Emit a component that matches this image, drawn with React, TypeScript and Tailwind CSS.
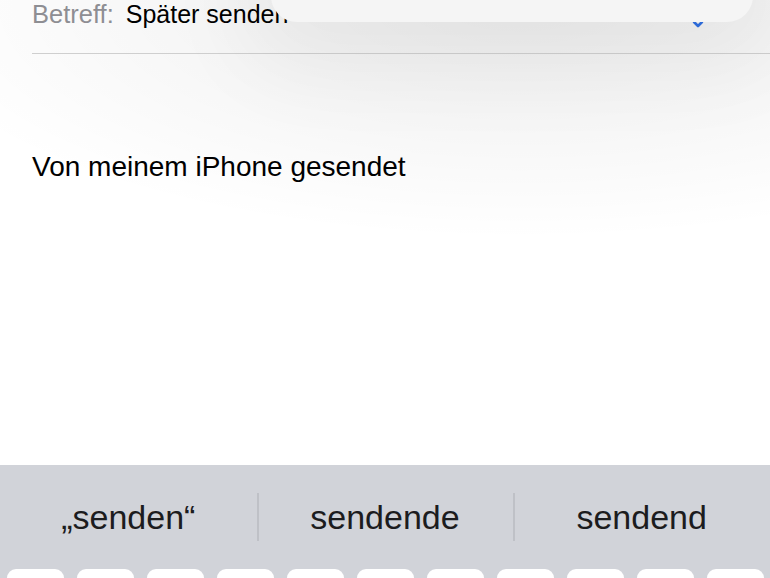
import React from "react";

export default function App() {
  const keys = Array.from({ length: 11 }, (_, i) => i);
  return (
    <div
      className="relative w-[770px] h-[578px] overflow-hidden bg-white flex flex-col"
      style={{ fontFamily: '"Liberation Sans", Arial, sans-serif' }}
    >
      {/* soft shadow backdrop */}
      <div className="absolute inset-0 bg-[radial-gradient(ellipse_640px_240px_at_520px_0px,rgba(0,0,0,0.075),rgba(0,0,0,0.0)_100%)]" />

      {/* subject row */}
      <div className="relative flex items-start ml-[32px] h-[54px] border-b border-[#cfcfcf]">
        <span className="text-[25.5px] leading-[28px] text-[#8e8e93]">Betreff:</span>
        <span className="ml-[12px] text-[25px] leading-[28px] text-black">Später senden</span>
        <svg className="ml-auto mr-[66px] mt-[19px]" width="12" height="10" viewBox="0 0 12 10">
          <path d="M2 3 L6 7 L10 3" fill="none" stroke="#2f6fe0" strokeWidth="2.6" strokeLinecap="round" strokeLinejoin="round" />
        </svg>
      </div>

      {/* popup overlay */}
      <div className="absolute left-[271px] top-[-60px] w-[482px] h-[82px] rounded-[26px] bg-[#f5f5f5] shadow-[0_16px_90px_30px_rgba(0,0,0,0.05)]" />

      {/* body */}
      <div className="relative ml-[32px] mt-[96px] text-[28px] leading-[34px] text-black">
        Von meinem iPhone gesendet
      </div>

      {/* keyboard */}
      <div className="relative mt-auto h-[113px] shrink-0 bg-[#d1d3d9] flex flex-col">
        <div className="grid grid-cols-3 h-[104px] shrink-0 items-center text-[34px] text-[#1c1c1e]">
          <div className="text-center">„senden“</div>
          <div className="relative text-center">
            <span className="absolute left-0 top-1/2 -translate-y-1/2 h-[48px] w-[2px] bg-[#bfc1c7]" />
            sendende
          </div>
          <div className="relative text-center">
            <span className="absolute left-0 top-1/2 -translate-y-1/2 h-[48px] w-[2px] bg-[#bfc1c7]" />
            sendend
          </div>
        </div>
        <div className="flex gap-[13px] pl-[7px] h-[9px] overflow-hidden">
          {keys.map((k) => (
            <div key={k} className="w-[57px] h-[40px] shrink-0 rounded-[9px] bg-white" />
          ))}
        </div>
      </div>
    </div>
  );
}
